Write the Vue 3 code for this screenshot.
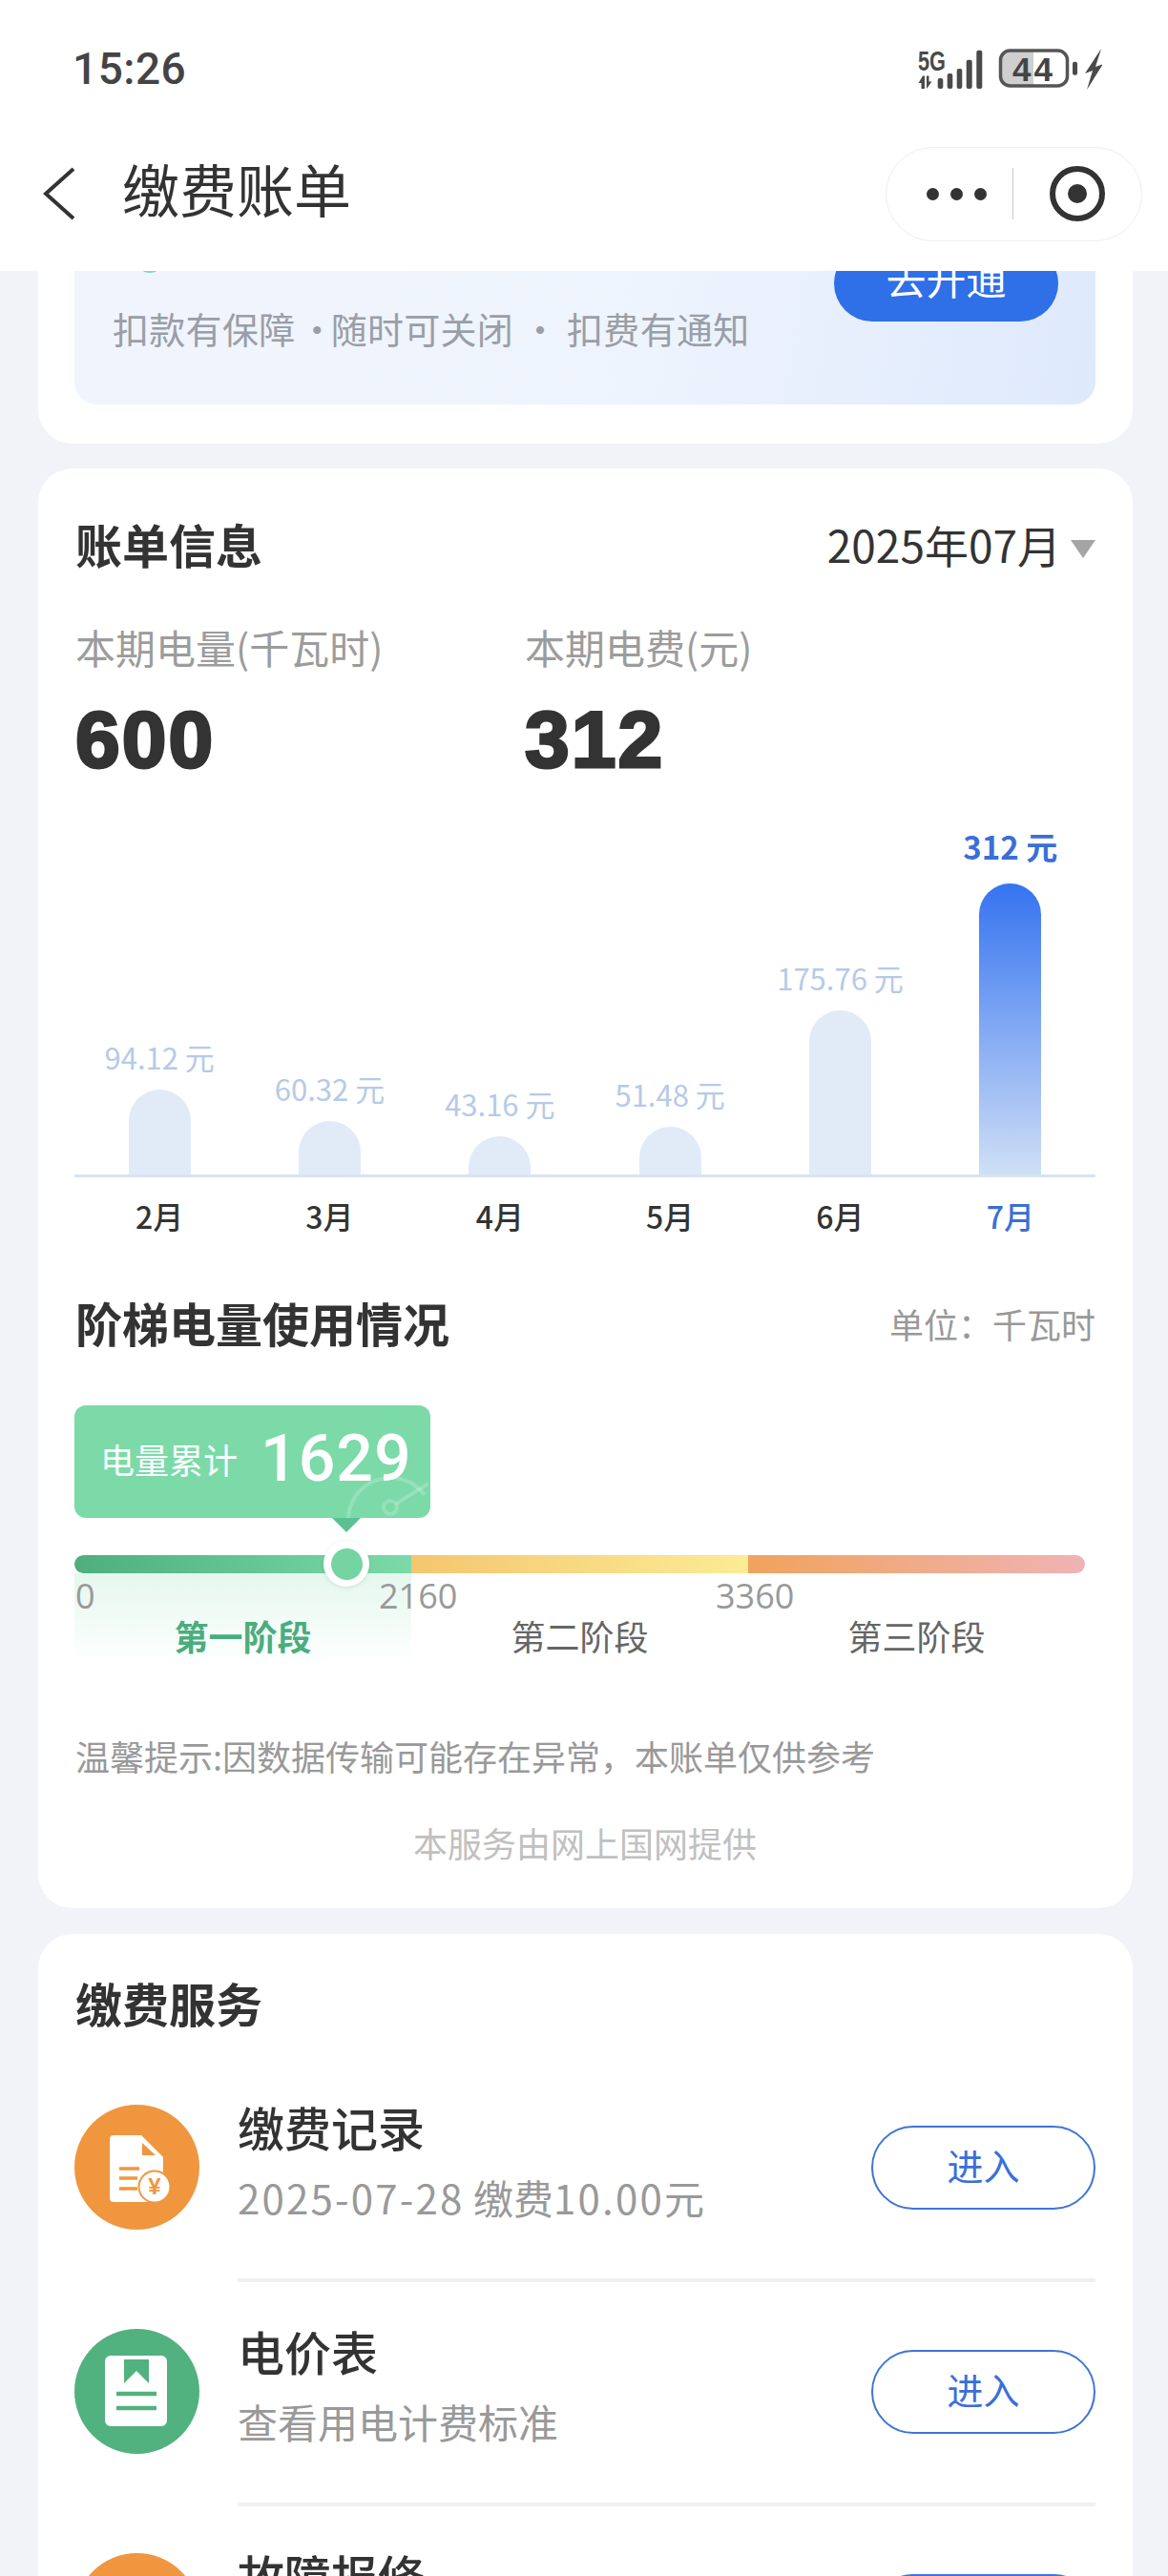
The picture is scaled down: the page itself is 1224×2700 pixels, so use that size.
<template>
  <div class="page">
    <header class="top">
      <div class="status">
        <span class="clock">15:26</span>
        <svg class="status-icons" width="193" height="44" viewBox="0 0 193 44">
          <text x="0" y="23.5" class="net" textLength="29" lengthAdjust="spacingAndGlyphs">5G</text>
          <path d="M5 29.5 0.5 37H3.5V43H7V29.5ZM9 43 14.5 35.5H11.5V29.5H9Z" fill="#4a4a4a" />
          <rect v-for="b in signal" :key="b.x" :x="b.x" :y="b.y" :width="b.w" :height="43 - b.y" rx="2" fill="#4a4a4a" />
          <path d="M96 3.5H121V39.5H96A9 9 0 0 1 87 30.5V12.5A9 9 0 0 1 96 3.5Z" fill="#cfcfcf" />
          <rect x="86.5" y="3" width="70" height="37" rx="10" fill="none" stroke="#555" stroke-width="3.5" />
          <text x="121.5" y="34.5" class="batt" text-anchor="middle">44</text>
          <rect x="162" y="14.7" width="5" height="14" rx="2" fill="#4a4a4a" />
          <polygon points="192,1 175,27 183,24 177,44 194,17 186,20" fill="#4a4a4a" />
        </svg>
      </div>
      <nav class="nav">
        <svg class="back" width="36" height="58" viewBox="0 0 36 58">
          <path d="M32 3 3 29 32 55" fill="none" stroke="#333" stroke-width="4" />
        </svg>
        <h1 class="nav-title">缴费账单</h1>
        <div class="capsule">
          <span class="dots"><i /><i /><i /></span>
          <span class="capsule-line" />
          <svg width="58" height="58" viewBox="0 0 58 58">
            <circle cx="29" cy="29" r="26" fill="none" stroke="#333" stroke-width="6" />
            <circle cx="29" cy="29" r="10" fill="#333" />
          </svg>
        </div>
      </nav>
    </header>

    <section class="card card-first">
      <div class="banner">
        <i class="banner-mark" />
        <button class="open-btn">去开通</button>
        <p class="banner-text">扣款有保障 <span class="sep">·</span>随时可关闭 · 扣费有通知</p>
      </div>
    </section>

    <section class="card card-bill">
      <div class="row-head">
        <h2 class="card-title">账单信息</h2>
        <div class="date">2025年07月<i class="caret" /></div>
      </div>
      <div class="stats">
        <div class="stat">
          <div class="stat-label">本期电量(千瓦时)</div>
          <div class="stat-num">600</div>
        </div>
        <div class="stat">
          <div class="stat-label">本期电费(元)</div>
          <div class="stat-num">312</div>
        </div>
      </div>

      <div class="chart">
        <div v-for="m in months" :key="m.label" class="col" :class="{ on: m.on }">
          <span class="val">{{ m.val }} 元</span>
          <div class="bar" :style="{ height: m.h + 'px' }" />
        </div>
      </div>
      <div class="month-row">
        <span v-for="m in months" :key="m.label" :class="{ on: m.on }">{{ m.label }}</span>
      </div>

      <div class="row-head tier-head">
        <h2 class="card-title">阶梯电量使用情况</h2>
        <span class="unit">单位：千瓦时</span>
      </div>

      <div class="tip-bubble">
        <span class="tip-label">电量累计</span>
        <span class="tip-num">1629</span>
        <svg class="gauge" width="90" height="46" viewBox="0 0 90 46">
          <path d="M4 46A44 44 0 0 1 48 4 44 44 0 0 1 84 22" fill="none" stroke="#fff" stroke-opacity=".2" stroke-width="4" />
          <circle cx="48" cy="35" r="7" fill="none" stroke="#fff" stroke-opacity=".2" stroke-width="4" />
          <path d="M54 31 88 10" stroke="#fff" stroke-opacity=".2" stroke-width="4" />
        </svg>
      </div>

      <div class="tiers">
        <div class="thumb"><i /></div>
        <div v-for="t in tiers" :key="t.name" class="tier" :class="t.cls">
          <div class="seg" />
          <div class="tier-body">
            <div class="tick">{{ t.tick }}</div>
            <div class="tier-name">{{ t.name }}</div>
          </div>
        </div>
      </div>

      <p class="notice">温馨提示:因数据传输可能存在异常，本账单仅供参考</p>
      <p class="provider">本服务由网上国网提供</p>
    </section>

    <section class="card card-service">
      <h2 class="card-title">缴费服务</h2>

      <div class="svc">
        <svg class="svc-icon" width="131" height="131" viewBox="0 0 131 131">
          <circle cx="65.5" cy="65.5" r="65.5" fill="#f0963f" />
          <path d="M41 32H70L93 55V98A4 4 0 0 1 89 102H41A4 4 0 0 1 37 98V36A4 4 0 0 1 41 32Z" fill="#fff" />
          <polygon points="71,40 71,53 85,53" fill="#f0963f" />
          <path d="M47 67H68M47 77H66M47 88H66" stroke="#f0963f" stroke-width="3.5" />
          <circle cx="84" cy="86" r="17.5" fill="#f0963f" />
          <circle cx="84" cy="86" r="15.5" fill="#fff" />
          <text x="84" y="94" class="yen" text-anchor="middle">¥</text>
        </svg>
        <div class="svc-body">
          <div class="svc-info">
            <div class="svc-name">缴费记录</div>
            <div class="svc-sub"><span class="digits">2025-07-28</span> 缴费<span class="digits">10.00</span>元</div>
          </div>
          <button class="enter">进入</button>
        </div>
      </div>

      <div class="svc">
        <svg class="svc-icon" width="131" height="131" viewBox="0 0 131 131">
          <circle cx="65.5" cy="65.5" r="65.5" fill="#52b27f" />
          <rect x="32" y="28" width="65" height="74" rx="6" fill="#fff" />
          <polygon points="52,32 78,32 78,57 65,44 52,57" fill="#52b27f" />
          <path d="M44 68H86M44 83H86" stroke="#52b27f" stroke-width="4.5" />
        </svg>
        <div class="svc-body">
          <div class="svc-info">
            <div class="svc-name">电价表</div>
            <div class="svc-sub">查看用电计费标准</div>
          </div>
          <button class="enter">进入</button>
        </div>
      </div>

      <div class="svc">
        <svg class="svc-icon" width="131" height="131" viewBox="0 0 131 131">
          <circle cx="65.5" cy="65.5" r="65.5" fill="#f0963f" />
        </svg>
        <div class="svc-body">
          <div class="svc-info">
            <div class="svc-name">故障报修</div>
          </div>
          <button class="enter">进入</button>
        </div>
      </div>
    </section>
  </div>
</template>

<script setup>
const signal = [
  { x: 20.7, y: 32, w: 5.6 },
  { x: 30.7, y: 27, w: 5.6 },
  { x: 40.7, y: 22, w: 5.6 },
  { x: 50.7, y: 12.7, w: 6 },
  { x: 61.3, y: 2.7, w: 6 }
]

const months = [
  { label: '2月', val: '94.12', h: 89 },
  { label: '3月', val: '60.32', h: 56 },
  { label: '4月', val: '43.16', h: 40 },
  { label: '5月', val: '51.48', h: 50 },
  { label: '6月', val: '175.76', h: 172 },
  { label: '7月', val: '312', h: 305, on: true }
]

const tiers = [
  { name: '第一阶段', tick: '0', cls: 'first' },
  { name: '第二阶段', tick: '2160', cls: 'second' },
  { name: '第三阶段', tick: '3360', cls: 'third' }
]
</script>

<style>
html, body { margin: 0; background: #f1f3f8; }
</style>

<style scoped>
.page {
  width: 1224px;
  height: 2700px;
  overflow: hidden;
  background: #f1f3f8;
  color: #333;
  font-family: "Noto Sans CJK SC", "Noto Sans", sans-serif;
}
h1, h2, p { margin: 0; font-weight: normal; }
button { font-family: inherit; padding: 0; }
i { display: block; font-style: normal; }

/* top bar */
.top { height: 284px; background: #fff; }
.status { height: 144px; display: flex; align-items: center; justify-content: space-between; padding: 0 69px 0 76px; }
.clock { font: 500 46px/56px Roboto, sans-serif; color: #444; letter-spacing: .5px; }
.net { font: bold 29px "Liberation Sans", sans-serif; fill: #4a4a4a; }
.batt { font: bold 35px "Liberation Sans", sans-serif; fill: #444; letter-spacing: 3px; }
.nav { height: 118px; display: flex; align-items: center; padding-left: 45px; padding-right: 27px; }
.nav-title { margin-left: 47px; margin-bottom: 12px; font-size: 60px; line-height: 70px; color: #333; }
.capsule { margin-left: auto; width: 269px; height: 99px; box-sizing: border-box; border: 1px solid #eee; border-radius: 50px; display: flex; align-items: center; padding-left: 42px; }
.dots { display: flex; gap: 12px; }
.dots i { width: 13px; height: 13px; border-radius: 50%; background: #333; }
.capsule-line { width: 1px; height: 54px; background: #ccc; margin: 0 38px 0 27px; }

/* cards */
.card { width: 1147px; margin: 0 0 26px 40px; box-sizing: border-box; padding: 0 39px 0 38px; background: #fff; border-radius: 36px; }
.card-first { height: 181px; border-radius: 0 0 36px 36px; }
.banner { position: relative; height: 140px; overflow: hidden; border-radius: 0 0 24px 24px; background: linear-gradient(100deg, #f0f4fd 0%, #eef4fd 55%, #dee9fc 100%); }
.banner-mark { position: absolute; left: 72px; top: -3px; width: 14px; height: 5px; border-radius: 50%; background: #7fd8c0; }
.open-btn { position: absolute; top: -27px; right: 39px; width: 235px; height: 80px; padding-bottom: 14px; border: 0; border-radius: 40px; background: #2f6fe8; color: #fff; font-size: 42px; }
.banner-text { position: absolute; left: 40px; top: 35px; font-size: 38px; line-height: 50px; letter-spacing: .3px; color: #9a9ea6; white-space: nowrap; }
.sep { margin: 0 -5px; }

.card-title { font-size: 49px; line-height: 54px; padding-bottom: 6px; font-weight: 700; color: #333; }
.row-head { display: flex; align-items: center; justify-content: space-between; padding-left: 1px; }

/* bill card */
.card-bill { height: 1509px; padding-top: 52px; margin-bottom: 27px; }
.date { display: flex; align-items: center; font-size: 46px; line-height: 54px; padding-bottom: 6px; color: #333; }
.caret { width: 0; height: 0; margin-left: 10px; margin-top: 10px; border-style: solid; border-width: 19px 13px 0; border-color: #a5a5a5 transparent transparent; }
.stats { display: flex; margin-top: 53px; padding-left: 1px; }
.stat { width: 471px; }
.stat-label { font-size: 42px; line-height: 44px; padding-bottom: 6px; color: #9c9c9c; }
.stat-num { margin-top: 24px; font: bold 84px/90px "Liberation Sans", sans-serif; letter-spacing: 2px; color: #333; -webkit-text-stroke: 3px #333; }

.chart { display: grid; grid-template-columns: repeat(6, 1fr); height: 381px; margin-top: 30px; border-bottom: 3px solid #d8e3f4; }
.col { display: flex; flex-direction: column; align-items: center; justify-content: flex-end; }
.val { font-size: 31px; line-height: 34px; padding-bottom: 6px; margin-bottom: 11px; color: #b6cae8; white-space: nowrap; }
.bar { width: 65px; border-radius: 33px 33px 0 0; background: #e1ebf8; }
.col.on .val { color: #3a6fd8; font-size: 33px; font-weight: 700; margin-bottom: 16px; }
.col.on .bar { background: linear-gradient(180deg, #3573f0 0%, #cfdff6 100%); }
.month-row { display: grid; grid-template-columns: repeat(6, 1fr); margin-top: 21px; text-align: center; font-size: 32px; line-height: 38px; font-weight: 500; color: #333; }
.month-row span { padding-bottom: 6px; }
.month-row .on { color: #3a6fd8; }

.tier-head { margin-top: 60px; }
.unit { font-size: 36px; line-height: 50px; padding-bottom: 4px; color: #999; }

.tip-bubble { position: relative; width: 373px; height: 118px; margin-top: 54px; box-sizing: border-box; padding-left: 27px; display: flex; align-items: center; border-radius: 12px; background: #7bdaa8; color: #fff; }
.tip-bubble::after { content: ""; position: absolute; left: 270px; top: 118px; border-style: solid; border-width: 15px 15px 0; border-color: #5dc093 transparent transparent; }
.tip-label { font-size: 36px; line-height: 44px; padding-bottom: 6px; }
.tip-num { margin-left: 24px; font: 500 68px/80px Roboto, sans-serif; letter-spacing: 1px; margin-top: -6px; }
.gauge { position: absolute; right: 0; bottom: 0; }

.tiers { position: relative; display: grid; grid-template-columns: repeat(3, 353px); margin-top: 39px; }
.thumb { position: absolute; z-index: 2; left: 261px; top: -15px; width: 48px; height: 48px; box-sizing: border-box; padding: 7.5px; border-radius: 50%; background: #fff; box-shadow: 0 1px 4px rgba(80, 120, 100, .18); }
.thumb i { width: 33px; height: 33px; border-radius: 50%; background: #74d4a2; }
.seg { height: 19px; }
.first .seg { border-radius: 10px 0 0 10px; background: linear-gradient(90deg, #4fae7e, #7bdaa8); }
.second .seg { background: linear-gradient(90deg, #f4c66f, #fbec95); }
.third .seg { border-radius: 0 10px 10px 0; background: linear-gradient(90deg, #f0a35c, #f0b3b5); }
.tier-body { height: 96px; box-sizing: border-box; padding-top: 6px; }
.first .tier-body { background: linear-gradient(180deg, rgba(123, 218, 168, .2), rgba(123, 218, 168, 0)); }
.tick { font: 36px/36px "Open Sans", sans-serif; padding-bottom: 4px; color: #999; white-space: nowrap; }
.first .tick { margin-left: 1px; }
.second .tick, .third .tick { margin-left: -34px; }
.tier-name { font-size: 36px; line-height: 38px; padding-bottom: 6px; text-align: center; color: #666; }
.first .tier-name { color: #4aad7e; font-weight: 700; }

.notice { margin-top: 73px; padding-left: 1px; padding-bottom: 6px; font-size: 36px; line-height: 44px; color: #999; }
.provider { margin-top: 41px; padding-bottom: 6px; text-align: center; font-size: 36px; line-height: 44px; color: #c0c0c0; }

/* service card */
.card-service { padding-top: 45px; padding-left: 38px; height: 800px; }
.card-service .card-title { padding-left: 1px; margin-bottom: 25px; }
.svc { display: flex; height: 235px; }
.svc-icon { flex: none; margin: 49px 40px 0 0; }
.svc-body { flex: 1; display: flex; align-items: center; justify-content: space-between; box-sizing: border-box; border-bottom: 4px solid #f0f0f0; }
.svc-info { align-self: flex-start; padding-top: 45px; }
.svc-name { font-size: 49px; line-height: 54px; padding-bottom: 6px; font-weight: 500; color: #333; }
.svc-sub { margin-top: 20px; font-size: 42px; line-height: 42px; padding-bottom: 10px; color: #999; white-space: nowrap; }
.digits { letter-spacing: 2.2px; }
.enter { width: 235px; height: 88px; margin-top: -2px; padding-bottom: 6px; border: 2px solid #3f74d6; border-radius: 44px; background: #fff; color: #3a6fd8; font-size: 38px; }
.yen { font: bold 24px "Liberation Sans", sans-serif; fill: #f0963f; }
</style>
